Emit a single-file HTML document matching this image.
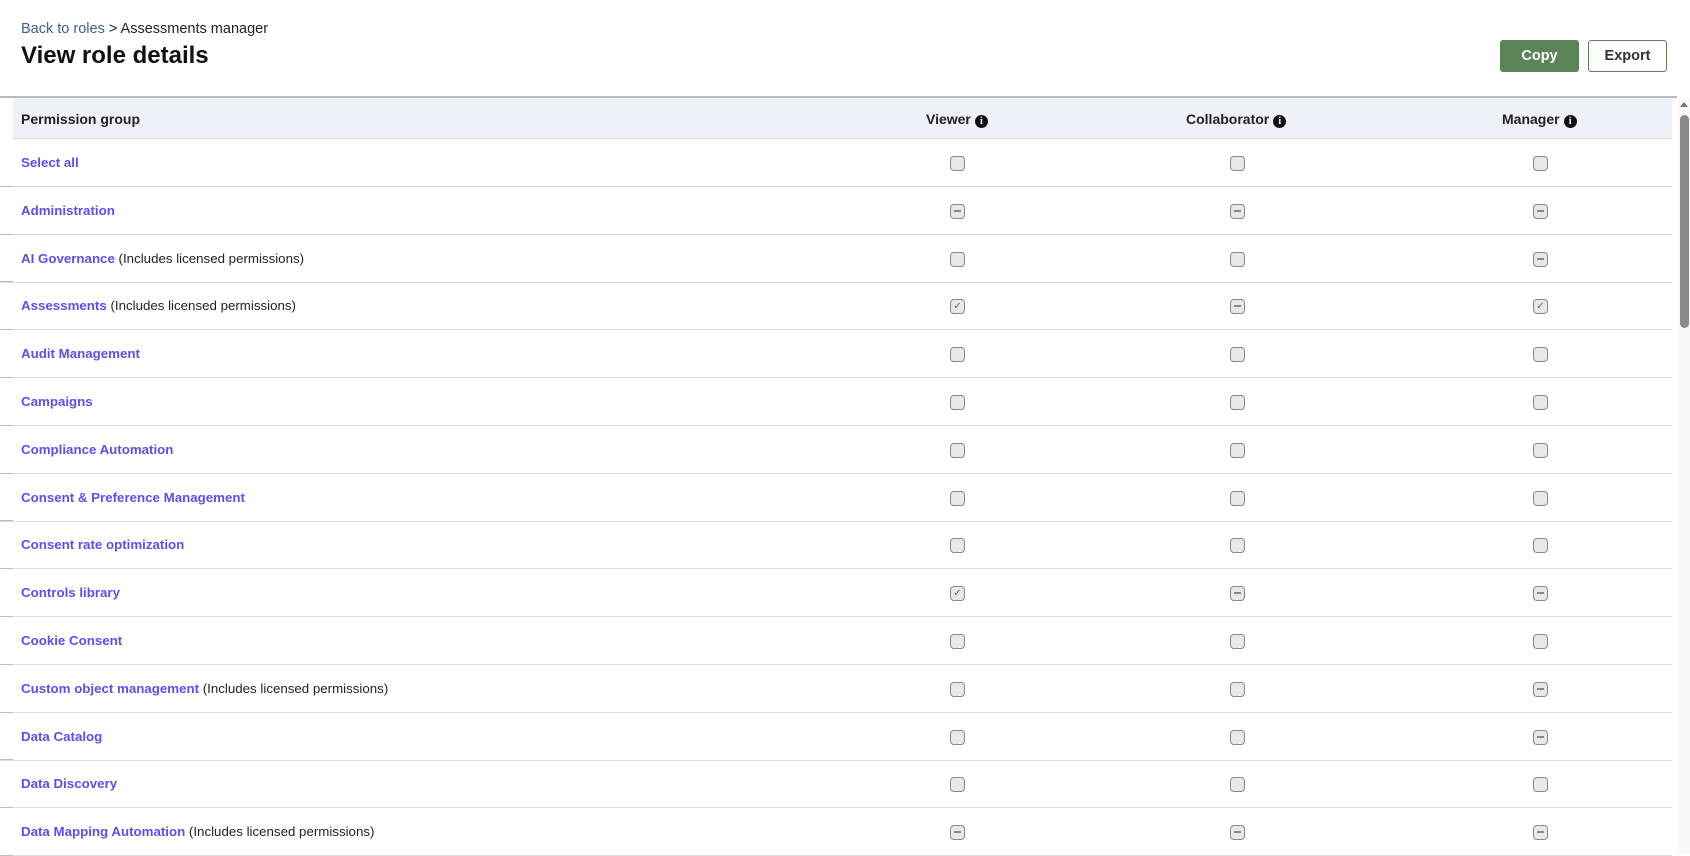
<!DOCTYPE html>
<html><head><style>
body{margin:0;width:1690px;height:854px;overflow:hidden;background:#fff;font-family:"Liberation Sans",sans-serif;position:relative}
.bc{position:absolute;left:21px;top:21px;font-size:14.5px;color:#222}
.bc a{color:#3f5f8f}
.title{position:absolute;left:21px;top:42px;font-size:24px;color:#111;font-weight:600}
.btn{position:absolute;top:40px;height:32px;width:79px;border-radius:3px;box-sizing:border-box;font-size:14.5px;font-weight:700;text-align:center;line-height:32px}
.copy{left:1500px;background:#5c8357;color:#fff}
.exp{left:1588px;border:1px solid #5c8357;color:#333;background:#fff;font-weight:600;line-height:30px}
.topline{position:absolute;left:0;top:96px;width:1677px;height:2px;background:#bbb}
.hdr{position:absolute;left:13px;top:98px;width:1659px;height:40px;background:#eef1f8;border-bottom:1px solid #ddd}
.h{position:absolute;top:111px;font-size:14px;font-weight:700;color:#222}
.info{display:inline-block;width:13px;height:13px;border-radius:50%;background:#111;color:#fff;font-size:10px;line-height:13px;text-align:center;font-family:"Liberation Serif",serif;font-weight:700;vertical-align:0px;margin-left:4px}
.row{position:absolute;left:0;width:1672px;height:48px;border-bottom:1px solid #ddd}
.row .t{position:absolute;left:21px;top:17px;font-size:13.3px;color:#222}
.row .t b{color:#5b4ff2;font-weight:600}
.cb{position:absolute;top:18px;width:15px;height:15px;border:1px solid #888;border-radius:4px;background:#e8e8e8;box-sizing:border-box;font-size:10px;color:#666;text-align:center;line-height:13px}
.cb.i::after{content:"";position:absolute;left:3px;top:5px;width:7px;height:2px;background:#888}
.tick{position:absolute;left:0;width:13px;height:1px;background:#bbb}
.sb{position:absolute;left:1677px;top:98px;width:13px;height:756px;background:#f8f8f8}
.th{position:absolute;left:1680px;top:115px;width:9px;height:213px;border-radius:5px;background:#8a8a8a}
.ar{position:absolute;left:1680px;top:102px;width:0;height:0;border-left:4px solid transparent;border-right:4px solid transparent;border-bottom:5px solid #777}
</style></head><body>
<div class="bc"><a>Back to roles</a> &gt; Assessments manager</div>
<div class="title">View role details</div>
<div class="btn copy">Copy</div><div class="btn exp">Export</div>
<div class="topline"></div>
<div class="hdr"></div>
<div class="h" style="left:926px">Viewer<span class="info">i</span></div>
<div class="h" style="left:21px">Permission group</div>
<div class="h" style="left:1186px">Collaborator<span class="info">i</span></div>
<div class="h" style="left:1502px">Manager<span class="info">i</span></div>
<div class="sb"></div><div class="th"></div><div class="ar"></div>
<div id="rows"></div>
<script>
var R=[["Select all","","uuu"],["Administration","","iii"],["AI Governance"," (Includes licensed permissions)","uui"],["Assessments"," (Includes licensed permissions)","cic"],["Audit Management","","uuu"],["Campaigns","","uuu"],["Compliance Automation","","uuu"],["Consent &amp; Preference Management","","uuu"],["Consent rate optimization","","uuu"],["Controls library","","cii"],["Cookie Consent","","uuu"],["Custom object management"," (Includes licensed permissions)","uui"],["Data Catalog","","uui"],["Data Discovery","","uuu"],["Data Mapping Automation"," (Includes licensed permissions)","iii"]];
var X=[950,1230,1533],h="";
R.forEach(function(r,k){var top=138+k*47.8;h+='<div class="row" style="top:'+top+'px"><div class="t"><b>'+r[0]+'</b>'+r[1]+'</div>';
for(var j=0;j<3;j++){var s=r[2][j];h+='<div class="cb '+s+'" style="left:'+X[j]+'px">'+(s=="c"?"&#10003;":"")+'</div>';}
h+='</div><div class="tick" style="top:'+(top+47.8)+'px"></div>';});
document.getElementById("rows").innerHTML=h;
</script>
</body></html>
